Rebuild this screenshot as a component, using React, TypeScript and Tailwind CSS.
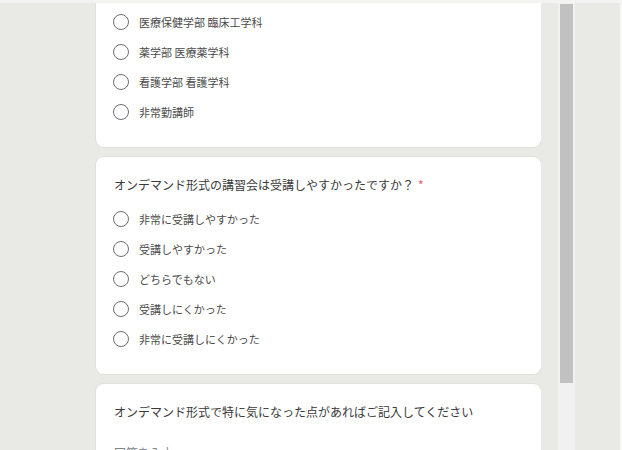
const font = { fontFamily: '"Noto Sans CJK JP", "Noto Sans", sans-serif' };

const deptOptions = ["医療保健学部 臨床工学科", "薬学部 医療薬学科", "看護学部 看護学科", "非常勤講師"];

const easeOptions = [
    "非常に受講しやすかった",
    "受講しやすかった",
    "どちらでもない",
    "受講しにくかった",
    "非常に受講しにくかった",
];

function Radio({ label }: { label: string }) {
    return (
        <label className="flex h-[30px] items-center gap-[10px] pl-[17px]">
            <span className="box-border h-4 w-4 shrink-0 rounded-full border-[1.5px] border-[#6b6f73]" />
            <span className="text-[11px] leading-[16px] text-[#4a4a4a]">{label}</span>
        </label>
    );
}

function Card({ children, className = "" }: { children: React.ReactNode; className?: string }) {
    return (
        <div className={`w-[445px] bg-white shadow-[0_0_0_1px_#e0e0dc] ${className}`}>
            {children}
        </div>
    );
}

export default function App() {
    return (
        <div className="flex h-[450px] w-[622px] flex-col overflow-hidden bg-[#e9e9e5]" style={font}>
            <div className="h-[3px] shrink-0 bg-[#f3f3f1]" />
            <div className="flex min-h-0 flex-1">
                <div className="flex flex-1 flex-col gap-[10px] overflow-hidden pl-[96px]">
                    {/* 所属 (上部は画面外) */}
                    <Card className="rounded-b-lg pt-[4px] pb-[20px]">
                        {deptOptions.map((o) => (
                            <Radio key={o} label={o} />
                        ))}
                    </Card>

                    <Card className="rounded-lg pt-[18px] pb-[20px]">
                        <p className="pl-[18px] text-[12px] leading-[20px] text-[#3a3a3a]">
                            オンデマンド形式の講習会は受講しやすかったですか？
                            <span className="ml-[4px] text-[#e25c5c]">*</span>
                        </p>
                        <div className="mt-[9px]">
                            {easeOptions.map((o) => (
                                <Radio key={o} label={o} />
                            ))}
                        </div>
                    </Card>

                    <Card className="shrink-0 rounded-t-lg pt-[18px] pb-[20px]">
                        <p className="pl-[18px] text-[12px] leading-[20px] text-[#3a3a3a]">
                            オンデマンド形式で特に気になった点があればご記入してください
                        </p>
                        <p className="mt-[22px] pl-[18px] text-[12px] leading-[18px] text-[#80868b]">回答を入力</p>
                    </Card>
                </div>

                {/* scrollbar */}
                <div className="ml-[17px] flex w-[17px] shrink-0 flex-col bg-[#f1f1f1]">
                    <div className="mx-[2px] mt-[1px] h-[379px] bg-[#c1c1c1]" />
                </div>
                <div className="w-[45px] shrink-0" />
                <div className="w-[2px] shrink-0 bg-[#f7f7f6]" />
            </div>
        </div>
    );
}
